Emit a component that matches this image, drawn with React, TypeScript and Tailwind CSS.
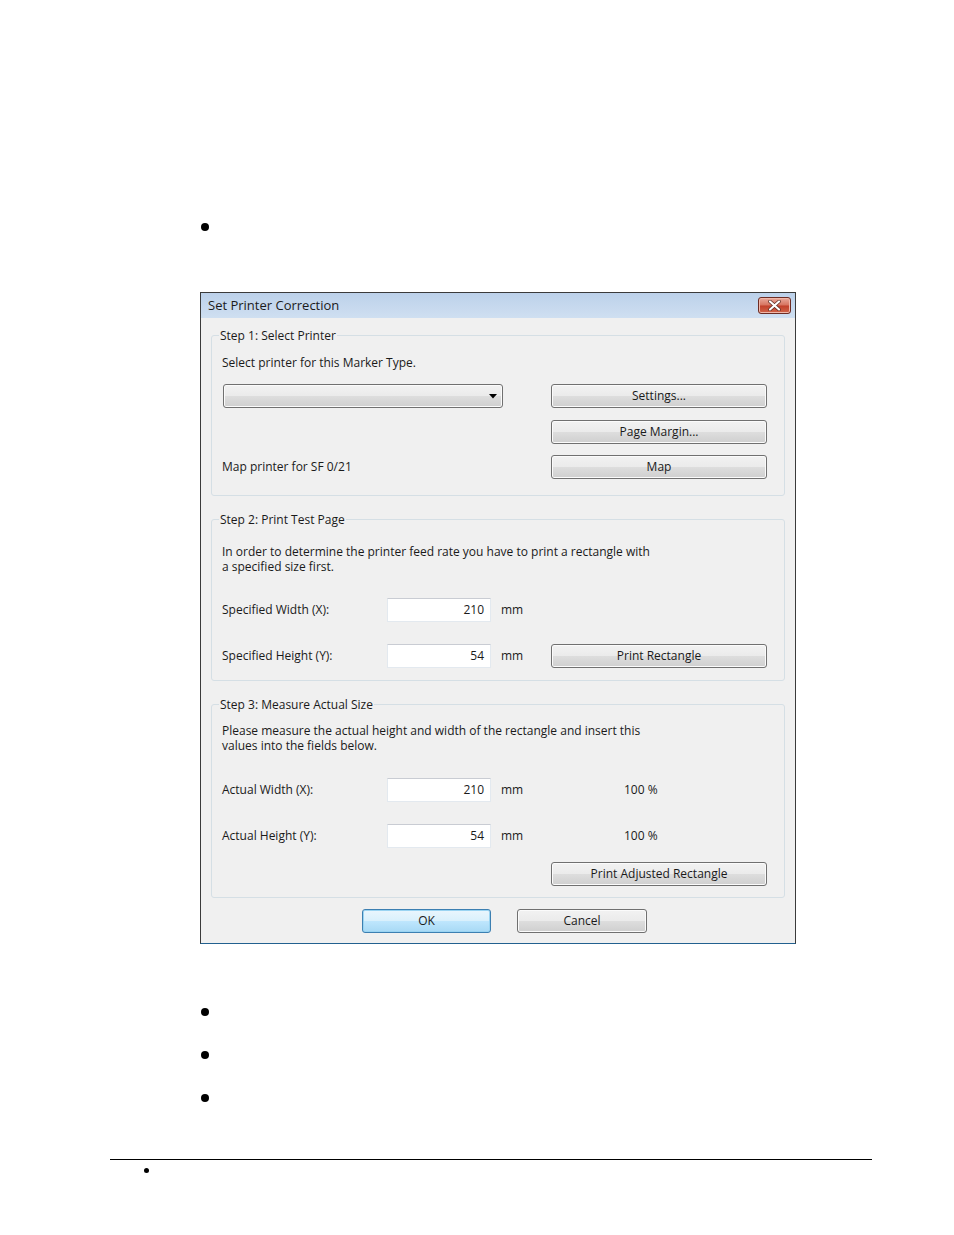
import React from "react";

const btnBase =
  "h-6 rounded-[3px] border border-[#707070] bg-[linear-gradient(to_bottom,#f2f2f2_0%,#ebebeb_48%,#dddddd_52%,#cfcfcf_100%)] shadow-[inset_0_0_0_1px_#fbfbfb] text-[12px] leading-[22px] text-[#1a1a1a] text-center";

function WinButton({ children, className = "" }: { children: React.ReactNode; className?: string }) {
  return <div className={`${btnBase} ${className}`}>{children}</div>;
}

function Field({ value }: { value: string }) {
  return (
    <div className="h-6 w-[104px] border border-[#e3e9ef] border-t-[#c9ccd3] bg-white pr-[6px] text-right leading-[22px]">
      {value}
    </div>
  );
}

function Combo() {
  return (
    <div className="ml-px flex h-6 w-[280px] items-center justify-end rounded-[3px] border border-[#707070] bg-[linear-gradient(to_bottom,#f2f2f2_0%,#ebebeb_48%,#dddddd_52%,#cfcfcf_100%)] pr-[5px] shadow-[inset_0_0_0_1px_#fbfbfb]">
      <svg width="8" height="5" viewBox="0 0 8 5">
        <path d="M0 0h8L4 4.5z" fill="#000" />
      </svg>
    </div>
  );
}

function CloseButton() {
  return (
    <div className="flex h-[17px] w-[33px] items-center justify-center rounded-[3px] border border-[#6d2c24] bg-[linear-gradient(to_bottom,#e9a99b_0%,#d7735f_48%,#c2402a_52%,#d0654a_100%)] shadow-[inset_0_0_0_1px_#f0b7a9]">
      <svg width="13" height="11" viewBox="0 0 13 11">
        <path d="M2 1.5l9 8M11 1.5l-9 8" stroke="#5a2a22" strokeWidth="3.6" strokeLinecap="round" />
        <path d="M2 1.5l9 8M11 1.5l-9 8" stroke="#ffffff" strokeWidth="2.2" strokeLinecap="round" />
      </svg>
    </div>
  );
}

function Group({ title, children, className = "" }: { title: string; children: React.ReactNode; className?: string }) {
  return (
    <fieldset className={`mx-[10px] rounded-[3px] border border-[#d5dfe5] ${className}`}>
      <legend className="ml-[7px] px-px leading-[15px]">{title}</legend>
      <div className="pl-[10px] pr-[17px]">{children}</div>
    </fieldset>
  );
}

function Bullet() {
  return <div className="ml-[201px] h-2 w-2 rounded-full bg-black" />;
}

export default function App() {
  return (
    <div className="min-h-[1235px] w-[954px] bg-white pt-[223px]">
      <Bullet />

      <div className="ml-[200px] mt-[61px] flex h-[652px] w-[596px] flex-col border border-[#3b3b3b] border-b-[#22608f] bg-[#f0f0f0] font-['Open_Sans','Liberation_Sans',sans-serif] text-[12px] text-[#1a1a1a]">
        <div className="flex h-[25px] items-center justify-between bg-[linear-gradient(to_bottom,#bcd1ea,#cfdff1)] pl-[7px] pr-[4px]">
          <span className="text-[13px] text-[#1b1b1b]">Set Printer Correction</span>
          <CloseButton />
        </div>

        <div className="pt-[10px]">
          <Group title="Step 1: Select Printer" className="pb-[16px]">
            <p className="mt-[12px] leading-[15px]">Select printer for this Marker Type.</p>
            <div className="mt-[14px] flex justify-between">
              <Combo />
              <WinButton className="w-[216px]">Settings...</WinButton>
            </div>
            <div className="mt-[12px] flex justify-end">
              <WinButton className="w-[216px]">Page Margin...</WinButton>
            </div>
            <div className="mt-[11px] flex items-center justify-between">
              <span>Map printer for SF 0/21</span>
              <WinButton className="w-[216px]">Map</WinButton>
            </div>
          </Group>

          <Group title="Step 2: Print Test Page" className="mt-[16px] pb-[12px]">
            <p className="mt-[17px] leading-[15px]">
              In order to determine the printer feed rate you have to print a rectangle with
              <br />a specified size first.
            </p>
            <div className="mt-[24px] flex items-center">
              <span className="w-[165px]">Specified Width (X):</span>
              <Field value="210" />
              <span className="ml-[10px]">mm</span>
            </div>
            <div className="mt-[22px] flex items-center">
              <span className="w-[165px]">Specified Height (Y):</span>
              <Field value="54" />
              <span className="ml-[10px]">mm</span>
              <WinButton className="ml-auto w-[216px]">Print Rectangle</WinButton>
            </div>
          </Group>

          <Group title="Step 3: Measure Actual Size" className="mt-[16px] pb-[11px]">
            <p className="mt-[11px] leading-[15px]">
              Please measure the actual height and width of the rectangle and insert this
              <br />values into the fields below.
            </p>
            <div className="mt-[25px] flex items-center">
              <span className="w-[165px]">Actual Width (X):</span>
              <Field value="210" />
              <span className="ml-[10px] w-[123px]">mm</span>
              <span>100 %</span>
            </div>
            <div className="mt-[22px] flex items-center">
              <span className="w-[165px]">Actual Height (Y):</span>
              <Field value="54" />
              <span className="ml-[10px] w-[123px]">mm</span>
              <span>100 %</span>
            </div>
            <div className="mt-[14px] flex justify-end">
              <WinButton className="w-[216px]">Print Adjusted Rectangle</WinButton>
            </div>
          </Group>

          <div className="ml-[161px] mt-[11px] flex gap-[26px]">
            <div className="h-6 w-[129px] rounded-[3px] border border-[#3c7fb1] bg-[linear-gradient(to_bottom,#eaf6fd_0%,#d9f0fc_48%,#bee6fd_52%,#a7d9f5_100%)] text-center leading-[22px] shadow-[inset_0_0_0_1px_#9ad4f2]">
              OK
            </div>
            <WinButton className="w-[130px]">Cancel</WinButton>
          </div>
        </div>
      </div>

      <div className="mt-[64px]">
        <Bullet />
      </div>
      <div className="mt-[35px]">
        <Bullet />
      </div>
      <div className="mt-[35px]">
        <Bullet />
      </div>

      <div className="ml-[110px] mt-[57px] h-px w-[762px] bg-black" />
      <div className="ml-[144px] mt-[8px] h-[5px] w-[5px] rounded-full bg-black" />
    </div>
  );
}
